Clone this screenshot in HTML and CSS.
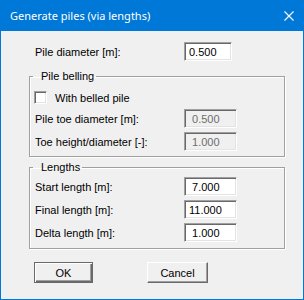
FILE: index.html
```html
<!DOCTYPE html>
<html lang="en">
<head>
    <meta charset="UTF-8">
    <title>Generate piles (via lengths)</title>
    <link rel="stylesheet" href="styles.css">
</head>
<body>
    <div class="window">
        <div class="titlebar">
            <span class="title">Generate piles (via lengths)</span>
            <svg class="close" width="10" height="10" viewBox="0 0 10 10">
                <path d="M0.5 0.5 L9.5 9.5 M9.5 0.5 L0.5 9.5" stroke="#fff" stroke-width="1.1" fill="none"/>
            </svg>
        </div>

        <div class="content">
            <div class="row top-row">
                <span class="label">Pile diameter [m]:</span>
                <input class="field narrow" type="text" value="0.500">
            </div>

            <fieldset class="group belling">
                <legend>Pile belling</legend>
                <label class="check-row">
                    <input class="check" type="checkbox">
                    <span>With belled pile</span>
                </label>
                <div class="row">
                    <span class="label">Pile toe diameter [m]:</span>
                    <input class="field" type="text" value=" 0.500" disabled>
                </div>
                <div class="row">
                    <span class="label">Toe height/diameter [-]:</span>
                    <input class="field" type="text" value=" 1.000" disabled>
                </div>
            </fieldset>

            <fieldset class="group lengths">
                <legend>Lengths</legend>
                <div class="row">
                    <span class="label">Start length [m]:</span>
                    <input class="field" type="text" value=" 7.000">
                </div>
                <div class="row">
                    <span class="label">Final length [m]:</span>
                    <input class="field" type="text" value="11.000">
                </div>
                <div class="row">
                    <span class="label">Delta length [m]:</span>
                    <input class="field" type="text" value=" 1.000">
                </div>
            </fieldset>

            <div class="buttons">
                <button class="btn default">OK</button>
                <button class="btn cancel">Cancel</button>
            </div>
        </div>
    </div>
</body>
</html>
```

FILE: styles.css
```css
body {
    margin: 0;
    font-family: "Liberation Sans", Arial, sans-serif;
    font-size: 11px;
    color: #000;
}

.window {
    width: 304px;
    height: 300px;
    box-sizing: border-box;
    border: 1px solid #0078d7;
    border-top: 0;
    background: #f0f0f0;
}

.titlebar {
    height: 31px;
    background: #0078d7;
    color: #fff;
    display: flex;
    align-items: center;
    justify-content: space-between;
    padding: 0 9px;
    font-family: "Noto Sans", "Open Sans", sans-serif;
    font-size: 11px;
}

.content {
    padding: 11px 18px 0 28px;
}

.row {
    display: flex;
    align-items: center;
    height: 19px;
}

.top-row {
    padding-left: 6px;
}

.label {
    width: 149px;
}

.field {
    width: 53px;
    height: 19px;
    box-sizing: border-box;
    margin: 0;
    padding: 0 0 0 4px;
    font: inherit;
    color: #000;
    background: #fff;
    border: 1px solid;
    border-color: #a0a0a0 #fff #fff #a0a0a0;
    box-shadow: inset 1px 1px 0 #696969, inset -1px -1px 0 #e3e3e3;
    outline: none;
    white-space: pre;
}

.field.narrow {
    width: 48px;
}

.field:disabled {
    background: #f0f0f0;
    color: #6d6d6d;
}

.group {
    margin: 0;
    padding: 0 0 5px 5px;
    border: 1px solid #a0a0a0;
    box-shadow: 1px 1px 0 #fff, inset 1px 1px 0 #fff;
}

.group legend {
    line-height: 13px;
    padding: 0 2px 0 8px;
    margin-left: -2px;
}

.group .row + .row {
    margin-top: 4px;
}

.belling {
    margin-top: 9px;
}

.lengths {
    margin-top: 4px;
    padding-bottom: 6px;
}

.lengths .row:first-of-type {
    margin-top: 3px;
}

.check-row {
    display: flex;
    align-items: center;
    height: 13px;
    margin-top: 8px;
    margin-bottom: 5px;
}

.check {
    appearance: none;
    width: 13px;
    height: 13px;
    margin: 0 8px 0 -1px;
    box-sizing: border-box;
    background: #fff;
    border: 1px solid;
    border-color: #a0a0a0 #fff #fff #a0a0a0;
    box-shadow: inset 1px 1px 0 #696969, inset -1px -1px 0 #e3e3e3;
}

.buttons {
    display: flex;
    gap: 54px;
    margin-top: 13px;
    padding-left: 5px;
}

.btn {
    width: 59px;
    height: 21px;
    box-sizing: border-box;
    padding: 0;
    font: inherit;
    color: #000;
    background: #f0f0f0;
    border: 1px solid;
    border-color: #fff #696969 #696969 #fff;
    box-shadow: inset -1px -1px 0 #a0a0a0;
}

.btn.default {
    border-color: #696969;
    box-shadow: inset 1px 1px 0 #fff, inset -1px -1px 0 #696969, inset -2px -2px 0 #a0a0a0;
}

.btn.cancel {
    width: 61px;
}
```
